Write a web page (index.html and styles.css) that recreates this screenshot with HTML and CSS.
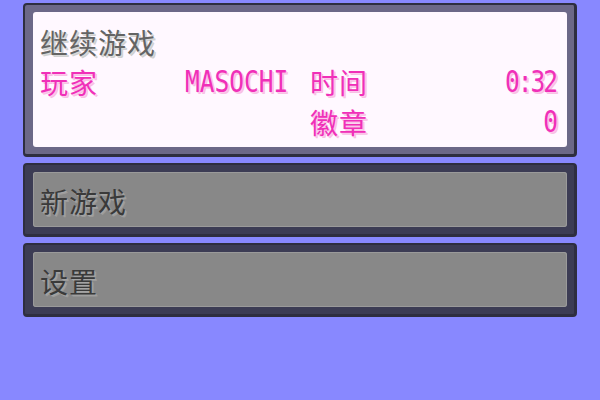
FILE: index.html
```html
<!DOCTYPE html>
<html lang="zh">
<head>
    <meta charset="UTF-8">
    <title>主菜单</title>
    <link rel="stylesheet" href="styles.css">
</head>
<body>
    <!-- 菜单 -->
    <div class="menu">
        <!-- 继续游戏：存档信息 -->
        <div class="panel panel-save">
            <div class="panel-body">
                <div class="title">继续游戏</div>
                <div class="save-grid">
                    <span class="pink cjk">玩家</span>
                    <span class="pink latin"><span class="stretch">MASOCHI</span></span>
                    <span class="pink cjk">时间</span>
                    <span class="pink latin value"><span class="stretch digits">0:32</span></span>

                    <span></span>
                    <span></span>
                    <span class="pink cjk">徽章</span>
                    <span class="pink latin value"><span class="stretch digits">0</span></span>
                </div>
            </div>
        </div>

        <div class="panel panel-option">
            <div class="panel-body">
                <div class="option">新游戏</div>
            </div>
        </div>

        <div class="panel panel-option">
            <div class="panel-body">
                <div class="option">设置</div>
            </div>
        </div>
    </div>
</body>
</html>
```

FILE: styles.css
```css
/* 基本样式 */
body {
    margin: 0;
    padding: 0;
    background-color: #8888ff;
    font-family: "Noto Sans CJK SC", sans-serif;
}

.menu {
    display: flex;
    flex-direction: column;
    gap: 6px;
    padding: 3px 23px 0;
}

/* 面板外框 */
.panel {
    border: 2px solid #2e2e40;
    border-right-width: 3px;
    border-bottom-width: 3px;
    border-radius: 4px;
    padding: 7px 7px 7px 8px;
}

.panel-body {
    border-radius: 3px;
}

.panel-save {
    background-color: #6c6888;
}

.panel-save .panel-body {
    background-color: #fff8ff;
    padding: 10px 9px 5px 7px;
}

.panel-option {
    background-color: #3c3c54;
}

.panel-option .panel-body {
    background-color: #888888;
    box-shadow: inset 0 0 0 1px #9a9a9a;
    padding: 9px 9px 6px 7px;
}

/* 文字 */
.title {
    height: 40px;
    line-height: 40px;
    font-size: 28px;
    letter-spacing: 1px;
    color: #646464;
    text-shadow: 1px 1px 0 #d8d8d8, 2px 2px 0 #d0d0d0;
}

.option {
    height: 40px;
    line-height: 40px;
    font-size: 28px;
    letter-spacing: 1px;
    color: #3a3a3a;
    text-shadow: 1px 1px 0 #a4a4a4, 2px 2px 0 #9c9c9c;
}

.save-grid {
    display: grid;
    grid-template-columns: 145px 125px 1fr auto;
    grid-auto-rows: 40px;
    align-items: center;
}

.pink {
    color: #f030b8;
    text-shadow: 1px 1px 0 #fcc8ec, 2px 2px 0 #f8c0e4;
}

.cjk {
    font-size: 28px;
    letter-spacing: 1px;
    line-height: 40px;
}

.latin {
    font-family: "DejaVu Sans Mono", monospace;
    font-size: 24.5px;
    line-height: 40px;
}

.value {
    text-align: right;
}

/* 像素字体偏高，纵向拉伸 */
.stretch {
    display: inline-block;
    transform: scaleY(1.22);
}

.digits {
    letter-spacing: -2px;
    margin-right: 2px;
}
```
